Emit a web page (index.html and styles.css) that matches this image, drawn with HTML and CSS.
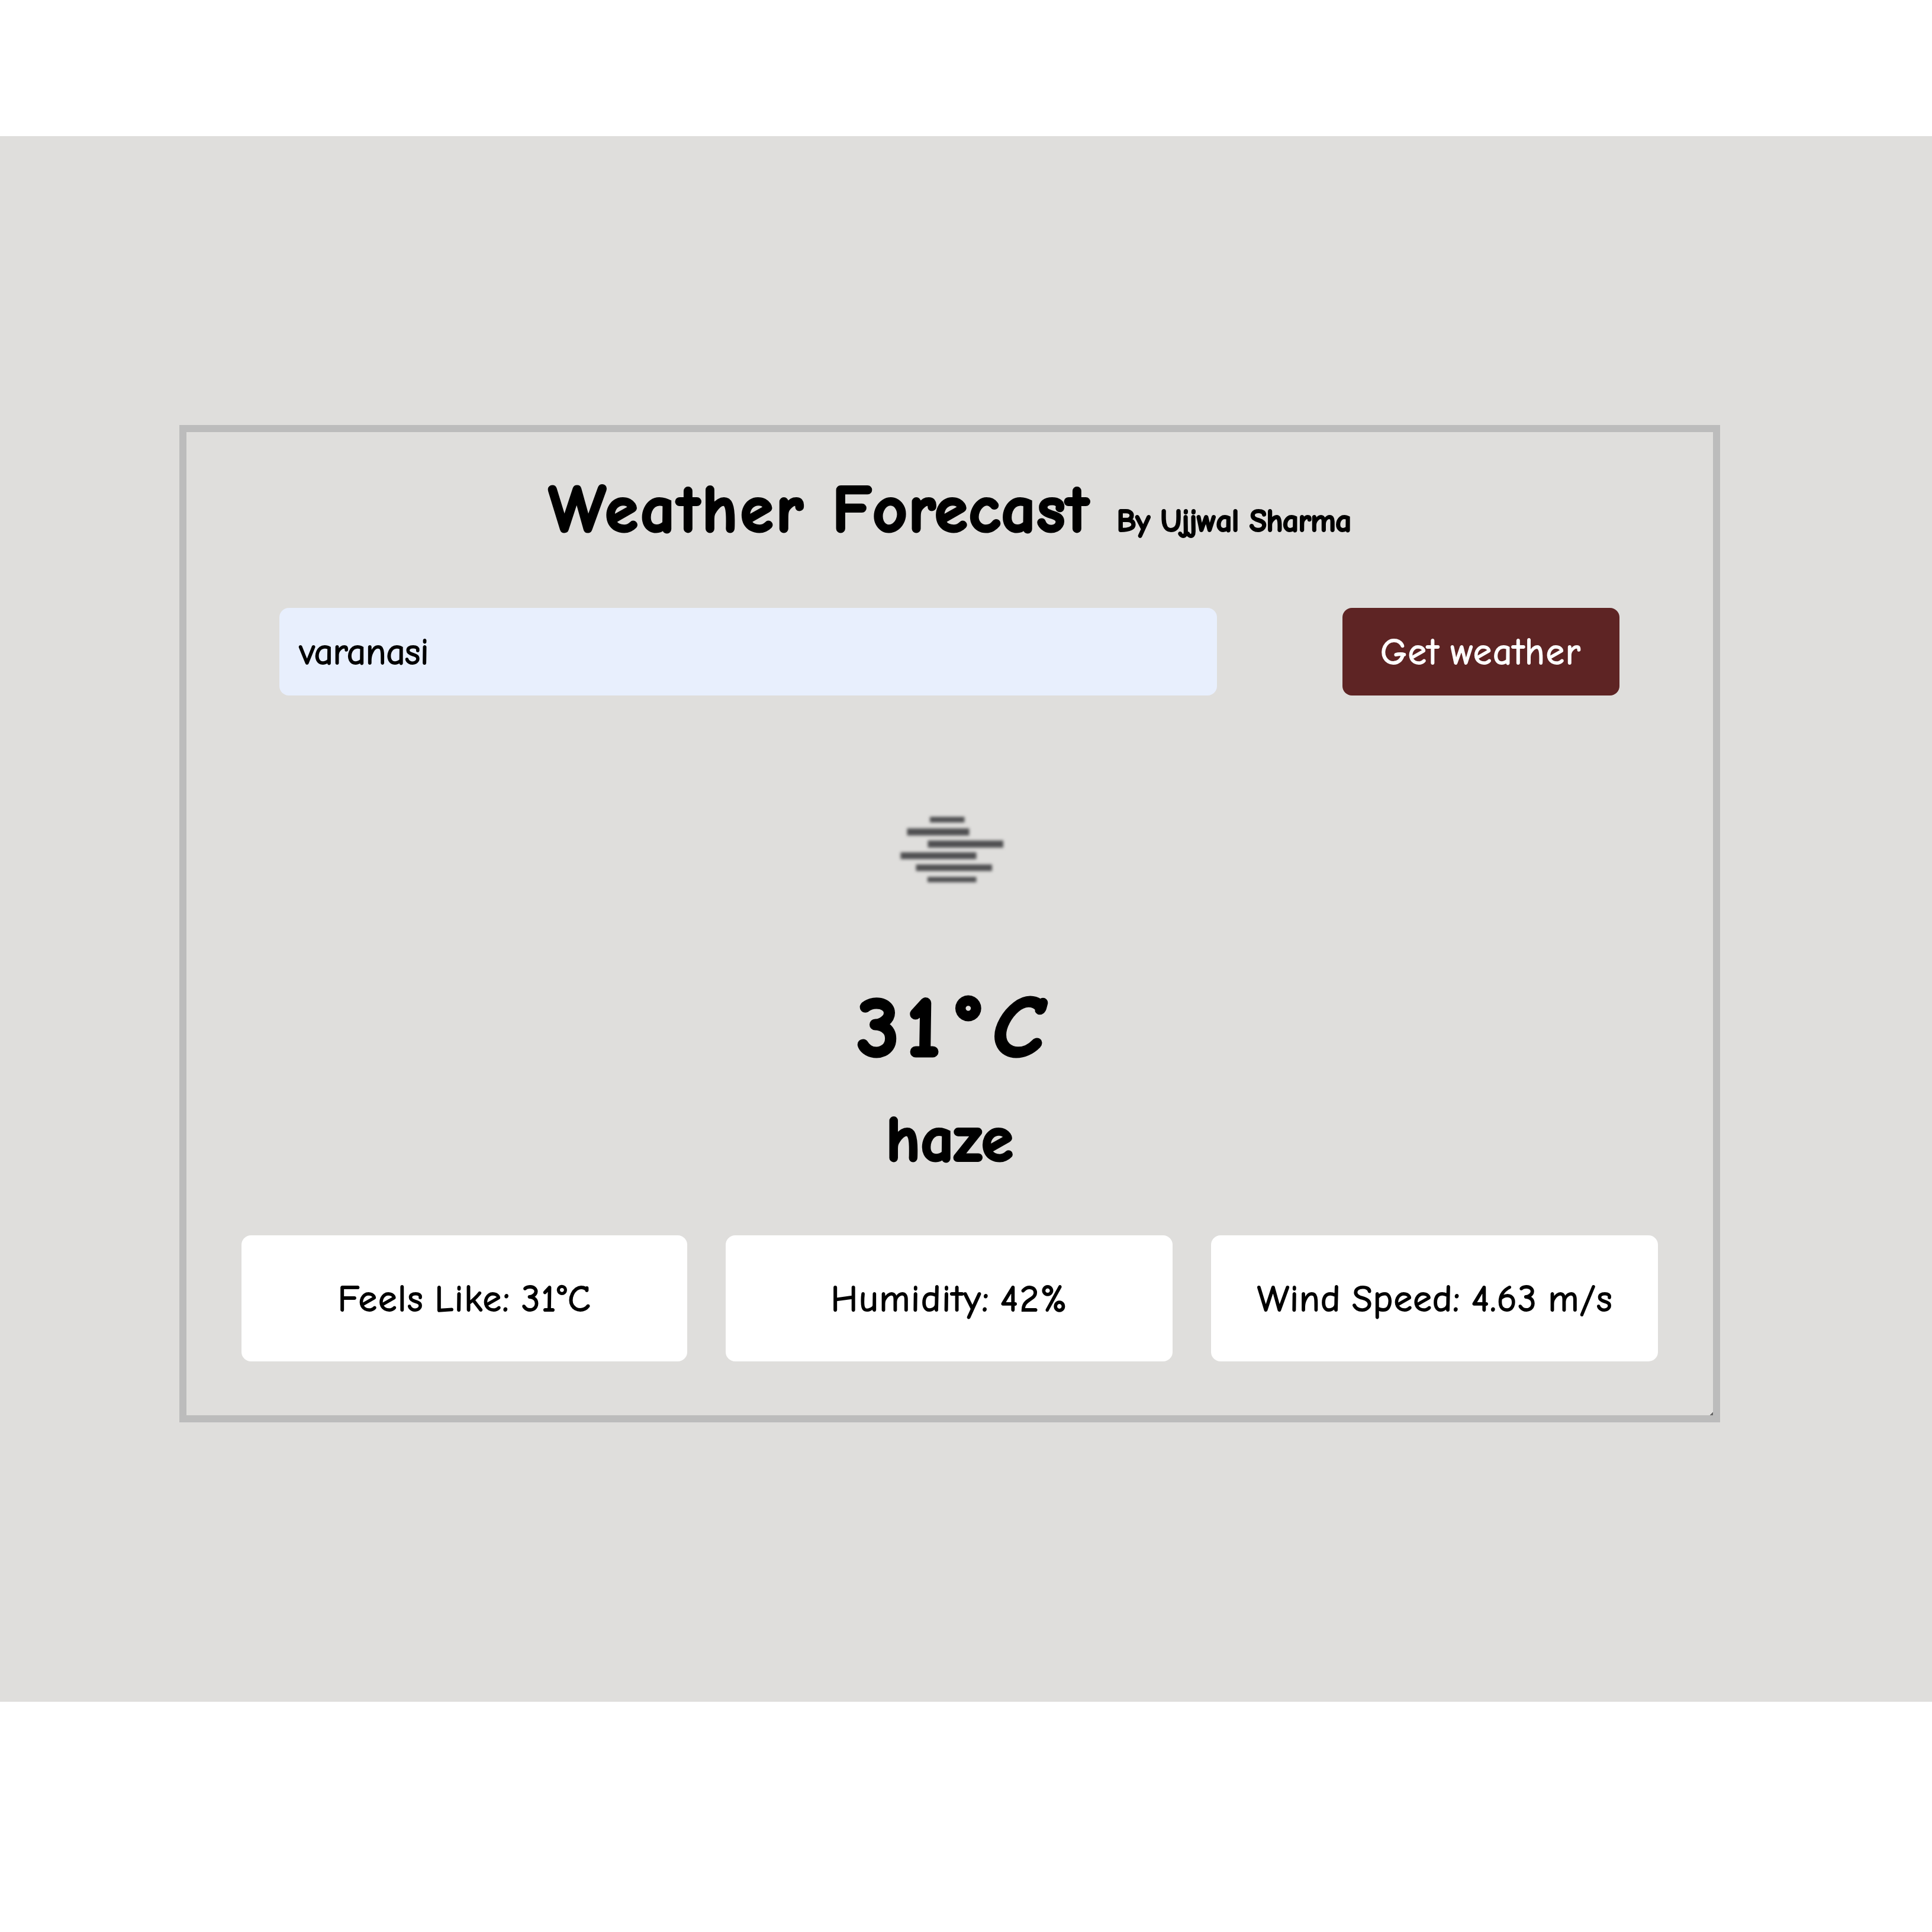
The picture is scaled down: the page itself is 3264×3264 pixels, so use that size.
FILE: index.html
```html
<!DOCTYPE html>
<html lang="en">
<head>
<meta charset="utf-8">
<title>Weather Forecast</title>
<link rel="stylesheet" href="styles.css">
</head>
<body>
<main class="page">
  <section class="panel">
    <h1 class="title"><span class="name"><span class="loose">Weather </span>Forecast</span><span class="author">By Ujjwal Sharma</span></h1>
    <form class="search">
      <div class="city"><span class="city-text">varanasi</span></div>
      <button class="submit" type="button"><span class="submit-text">Get weather</span></button>
    </form>
    <svg class="icon" viewBox="0 0 200 200" aria-hidden="true">
      <g fill="#505052">
        <rect x="66" y="45" width="58.500" height="9.500"/>
        <rect x="27.500" y="64.500" width="105" height="12"/>
        <rect x="62.500" y="85" width="127.500" height="12"/>
        <rect x="16.500" y="105" width="128" height="11.500"/>
        <rect x="42.500" y="125.500" width="128.500" height="11"/>
        <rect x="62" y="146.500" width="82.500" height="9"/>
      </g>
    </svg>
    <div class="temp"><span class="tens">3</span><span class="ones">1</span><span class="degree">°</span><span class="unit">C</span></div>
    <div class="desc">haze</div>
    <div class="stats">
      <div class="stat"><span class="feels">Feels Like: 31°C</span></div>
      <div class="stat"><span class="humidity">Humidity: 42%</span></div>
      <div class="stat"><span class="wind">Wind Speed: 4.63 m/s</span></div>
    </div>
    <i class="grip"></i>
  </section>
</main>
</body>
</html>
```
FILE: styles.css
```css
* { box-sizing: border-box; }

body {
  margin: 0;
  padding-top: 230px;
  background: #fff;
  color: #000;
  font-family: "Comic Sans MS", "Comic Neue", Inter, sans-serif;
}

.page {
  height: 2645px;
  padding: 488px 358px 0 303px;
  background: #dfdedc;
}

.panel {
  position: relative;
  display: flex;
  flex-direction: column;
  height: 1685px;
  padding: 66px 93px 0;
  border: 12px solid #bcbcbc;
}

.title {
  display: flex;
  justify-content: center;
  align-items: baseline;
  gap: 46px;
  height: 130px;
  margin: 0;
  font-size: 114px;
  line-height: 130px;
  font-weight: 700;
  white-space: nowrap;
}

.name {
  letter-spacing: 1.7px;
  -webkit-text-stroke: 4px currentColor;
}

.loose { letter-spacing: 4.3px; }

.author {
  font-size: 54px;
  letter-spacing: -1px;
  -webkit-text-stroke: 2px currentColor;
}

.search {
  display: flex;
  justify-content: space-between;
  height: 148px;
  margin: 101px 65px 0 64px;
}

.city,
.submit {
  display: flex;
  align-items: center;
  height: 148px;
  padding-top: 1px;
  border-radius: 16px;
  font-size: 62px;
  white-space: nowrap;
  -webkit-text-stroke: 2px currentColor;
}

.city {
  width: 1584px;
  padding-left: 34px;
  background: #e8effd;
}

.submit {
  justify-content: center;
  width: 468px;
  padding: 1px 0 0;
  border: 0;
  background: #5e2424;
  color: #fff;
  font-family: inherit;
  letter-spacing: 2.2px;
  word-spacing: -4px;
}

.icon {
  align-self: center;
  width: 200px;
  height: 200px;
  margin-top: 160px;
  filter: blur(2.4px);
}

.temp {
  display: flex;
  justify-content: center;
  height: 160px;
  margin-top: 122px;
  font-size: 146px;
  line-height: 160px;
  font-weight: 700;
  -webkit-text-stroke: 5px currentColor;
}

.tens { margin-right: 12px; }
.ones { margin-right: 28px; }
.degree { margin-right: 20px; }
.unit { font-style: italic; }

.desc {
  height: 120px;
  margin-top: 49px;
  font-size: 110px;
  line-height: 120px;
  font-weight: 700;
  letter-spacing: 0.6px;
  text-align: center;
  -webkit-text-stroke: 4px currentColor;
}

.stats {
  display: grid;
  grid-template-columns: 753px 755px 755px;
  gap: 65px;
  margin-top: 101px;
}

.stat {
  display: flex;
  justify-content: center;
  align-items: center;
  height: 213px;
  padding: 3px 0 0 2px;
  border-radius: 16px;
  background: #fff;
  font-size: 62px;
  white-space: nowrap;
  -webkit-text-stroke: 2px currentColor;
}

.feels { letter-spacing: 2.4px; word-spacing: -5px; }
.humidity { letter-spacing: 2.6px; word-spacing: -6px; }
.wind { letter-spacing: 1.7px; word-spacing: -4px; }

.grip {
  position: absolute;
  right: 0;
  bottom: 0;
  width: 5px;
  height: 5px;
  background: linear-gradient(135deg, transparent 45%, #666 50%);
}
```
